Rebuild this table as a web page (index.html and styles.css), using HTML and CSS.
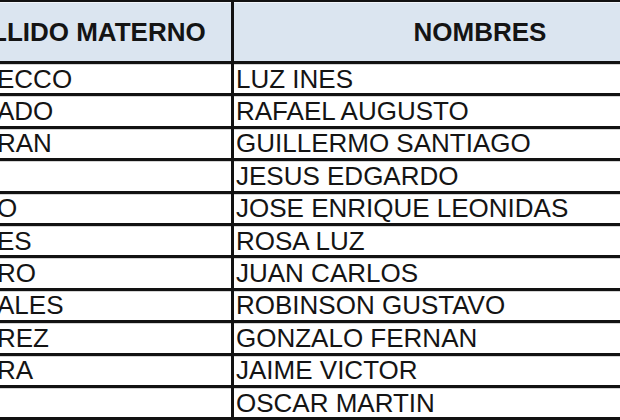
FILE: index.html
```html
<!DOCTYPE html>
<html lang="es">
<head>
<meta charset="utf-8">
<title>Nombres</title>
<link rel="stylesheet" href="styles.css">
</head>
<body>
<div class="sheet">
  <div class="row head">
    <div class="c1"><span class="htext">LLIDO MATERNO</span></div>
    <div class="c2"><span class="htext">NOMBRES</span></div>
  </div>
  <div class="row"><div class="c1">ECCO</div><div class="c2">LUZ INES</div></div>
  <div class="row"><div class="c1">ADO</div><div class="c2">RAFAEL AUGUSTO</div></div>
  <div class="row"><div class="c1">RAN</div><div class="c2">GUILLERMO SANTIAGO</div></div>
  <div class="row"><div class="c1"></div><div class="c2">JESUS EDGARDO</div></div>
  <div class="row"><div class="c1">O</div><div class="c2">JOSE ENRIQUE LEONIDAS</div></div>
  <div class="row"><div class="c1">ES</div><div class="c2">ROSA LUZ</div></div>
  <div class="row"><div class="c1">RO</div><div class="c2">JUAN CARLOS</div></div>
  <div class="row"><div class="c1">ALES</div><div class="c2">ROBINSON GUSTAVO</div></div>
  <div class="row"><div class="c1">REZ</div><div class="c2">GONZALO FERNAN</div></div>
  <div class="row"><div class="c1">RA</div><div class="c2">JAIME VICTOR</div></div>
  <div class="row"><div class="c1"></div><div class="c2">OSCAR MARTIN</div></div>
</div>
</body>
</html>
```
FILE: styles.css
```css
html, body {
  margin: 0;
  padding: 0;
  background: #ffffff;
  overflow: hidden;
}
.sheet {
  width: 620px;
  font-family: "Liberation Sans", Arial, sans-serif;
  font-size: 26px;
  color: #141414;
}
.row {
  display: grid;
  grid-template-columns: 234px 1fr;
  height: 32.4px;
  box-sizing: border-box;
  border-bottom: 3px solid #121212;
  box-shadow: 0 1px 0 #d4d4d4;
}
.row.head {
  height: 64px;
  border-top: 2px solid #121212;
  background: #dbe5f0;
  font-weight: bold;
  box-shadow: inset 0 1px 0 #f2f5fa, 0 1px 0 #d4d4d4;
}
.c1, .c2 {
  display: flex;
  align-items: center;
  overflow: hidden;
  white-space: nowrap;
  line-height: 1;
}
.c1 {
  border-right: 3px solid #121212;
  padding-left: 0;
}
.row .c1 {
  text-indent: -3px;
}
.c2 {
  padding-left: 2px;
}
.head .c1 {
  text-indent: -9px;
}
.head .c2 {
  justify-content: center;
  padding-left: 0;
  width: 492px;
}
```
